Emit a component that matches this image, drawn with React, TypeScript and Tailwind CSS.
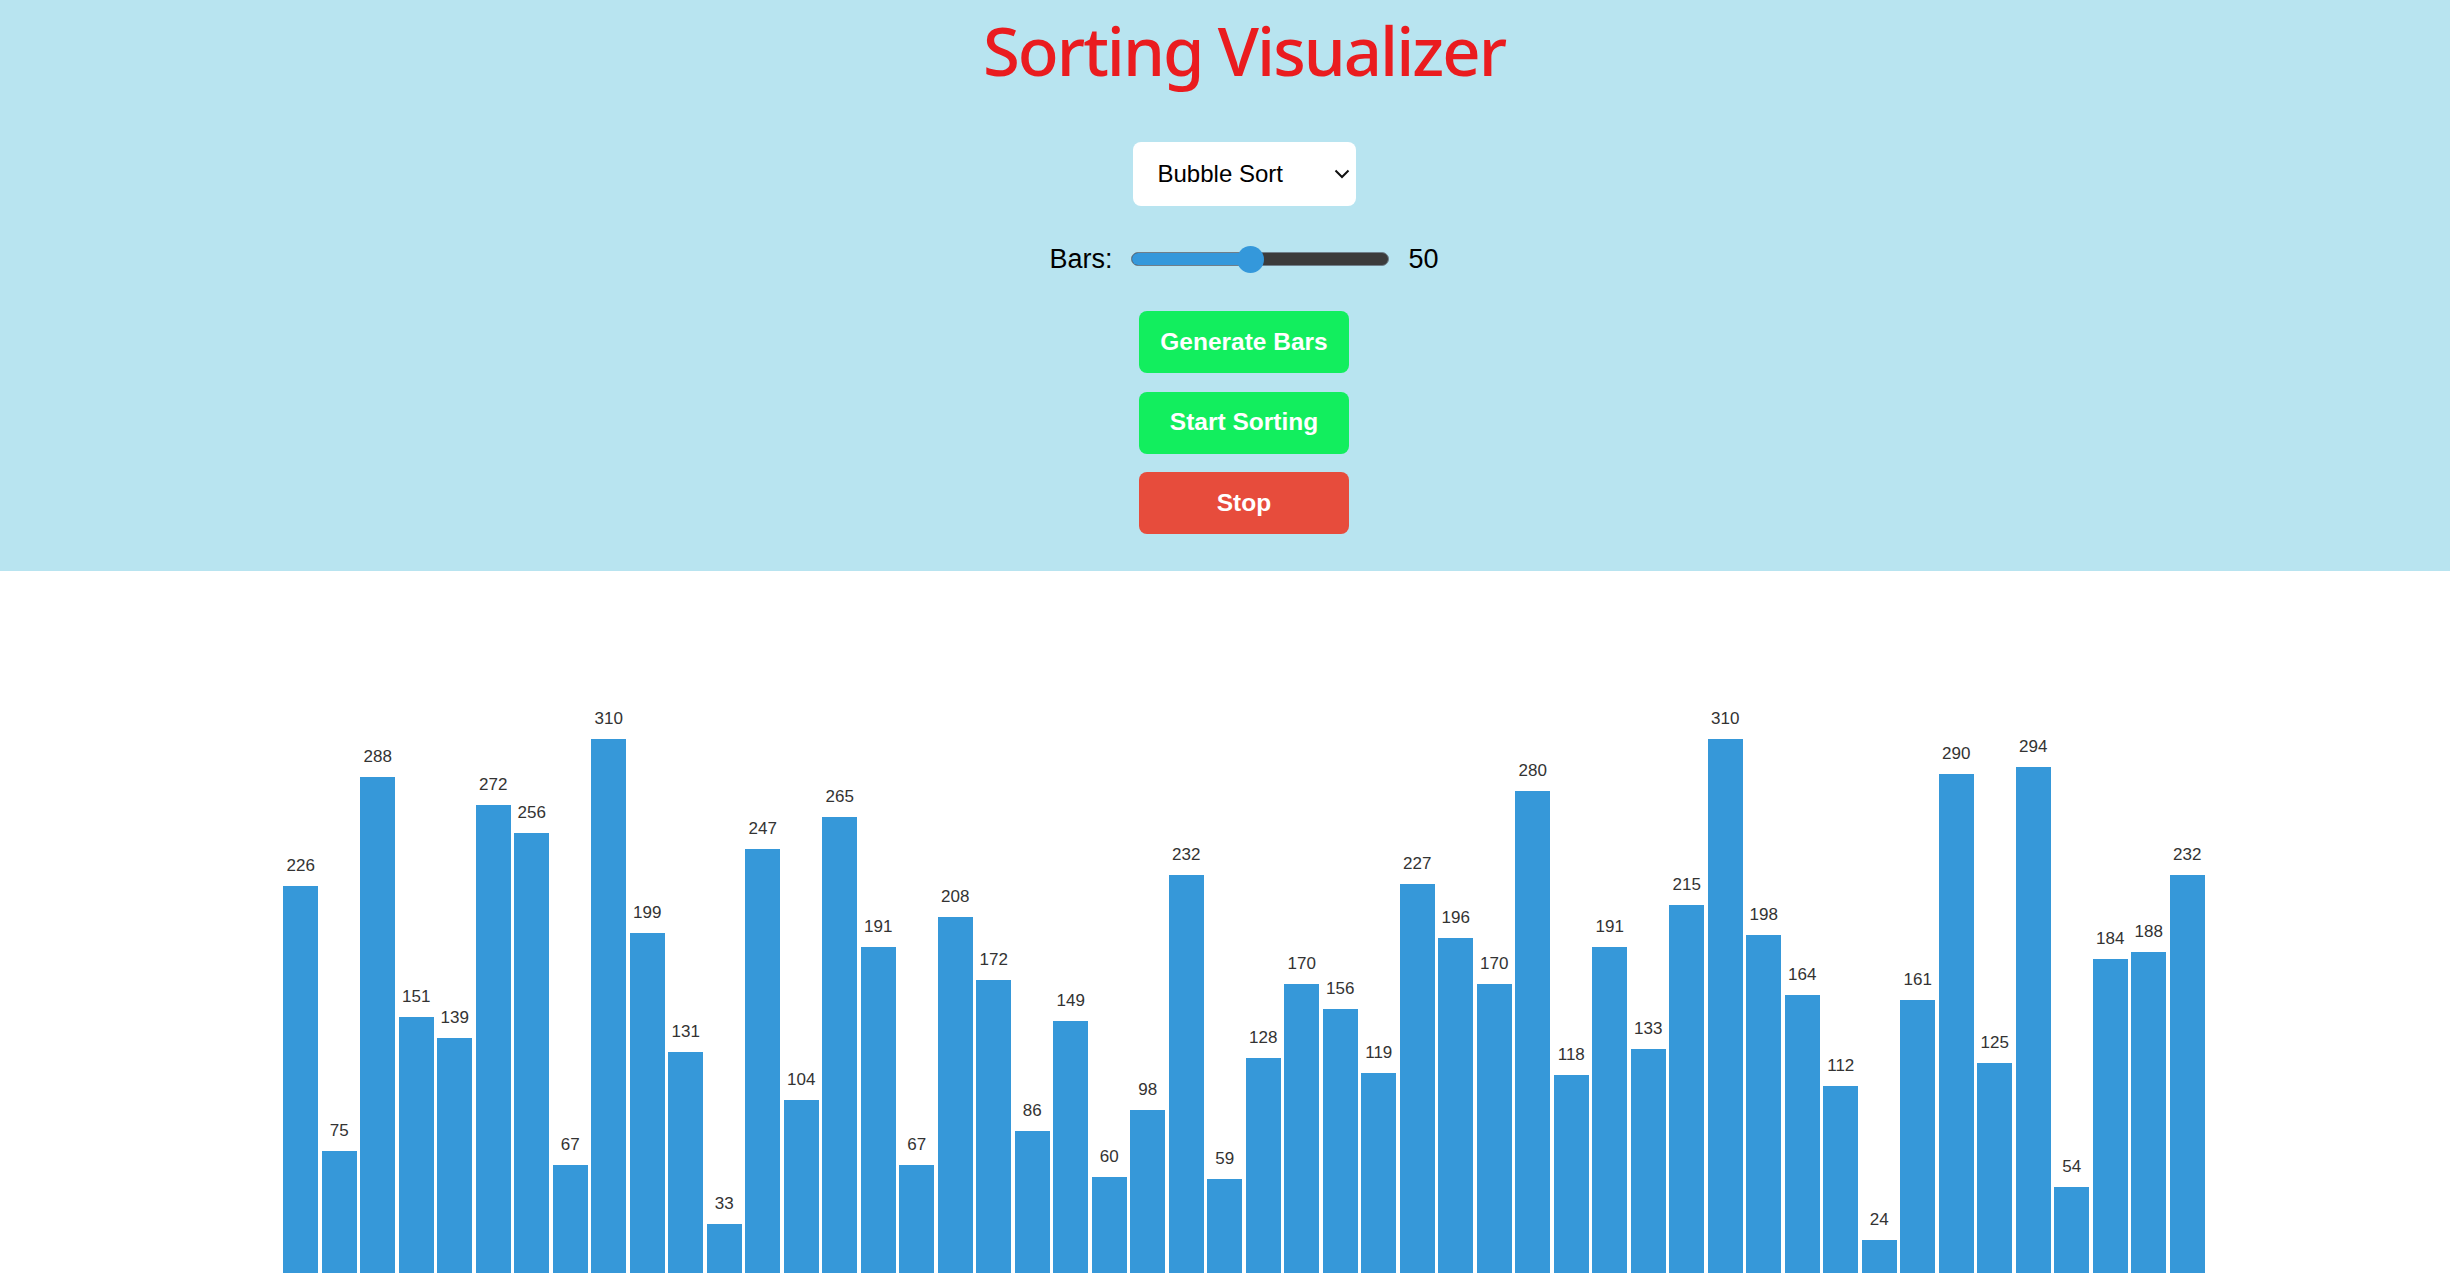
import React from "react";

const values = [
  226, 75, 288, 151, 139, 272, 256, 67, 310, 199,
  131, 33, 247, 104, 265, 191, 67, 208, 172, 86,
  149, 60, 98, 232, 59, 128, 170, 156, 119, 227,
  196, 170, 280, 118, 191, 133, 215, 310, 198, 164,
  112, 24, 161, 290, 125, 294, 54, 184, 188, 232,
];

function Slider() {
  const pct = 0.46;
  return (
    <div className="relative w-[258px] h-[28px] flex items-center">
      <div className="relative w-full h-[14px] rounded-full bg-[#3b3b3b] border-[1.5px] border-[#6f7f8a] overflow-hidden">
        <div className="h-full bg-[#3498db]" style={{ width: `${pct * 100}%` }} />
      </div>
      <div
        className="absolute top-[0.5px] w-[27px] h-[27px] rounded-full bg-[#3498db]"
        style={{ left: `calc(${pct * 100}% - 13.5px)` }}
      />
    </div>
  );
}

export default function App() {
  return (
    <div className="h-[1273px] overflow-hidden bg-white" style={{ fontFamily: '"Liberation Sans", Arial, sans-serif' }}>
      <header className="bg-[#b8e4f0] pt-[17px] pb-[37px]">
        <div className="pl-[38px] flex flex-col items-center">
          <h1
            className="text-[67px] leading-none text-[#ea1c1f] tracking-[-2px]"
            style={{ fontFamily: '"Noto Sans", "Open Sans", sans-serif', fontWeight: 500 }}
          >
            Sorting Visualizer
          </h1>
          <div className="relative mt-[58px]">
            <select
              className="appearance-none w-[223px] h-[64px] rounded-[8px] bg-white pl-[25px] pr-[40px] text-[24px] text-black outline-none border-0"
              style={{ fontFamily: '"Liberation Sans", Arial, sans-serif' }}
              defaultValue="bubble"
            >
              <option value="bubble">Bubble Sort</option>
              <option value="selection">Selection Sort</option>
              <option value="insertion">Insertion Sort</option>
              <option value="merge">Merge Sort</option>
              <option value="quick">Quick Sort</option>
            </select>
            <svg
              className="absolute right-[6px] top-[27px] pointer-events-none"
              width="16"
              height="10"
              viewBox="0 0 16 10"
              fill="none"
            >
              <path d="M1.5 1.5 L8 8 L14.5 1.5" stroke="#111" strokeWidth="2" />
            </svg>
          </div>
          <div className="mt-[37px] h-[32px] flex items-center gap-[19px] text-[27px] leading-[32px] text-black">
            <span>Bars:</span>
            <Slider />
            <span>50</span>
          </div>
          <div className="mt-[36px] flex flex-col gap-[18.5px]">
            <button className="w-[210px] h-[62px] rounded-[8px] bg-[#12ee5e] text-white text-[24.5px] font-bold">
              Generate Bars
            </button>
            <button className="w-[210px] h-[62px] rounded-[8px] bg-[#12ee5e] text-white text-[24.5px] font-bold">
              Start Sorting
            </button>
            <button className="w-[210px] h-[62px] rounded-[8px] bg-[#e74c3c] text-white text-[24.5px] font-bold">
              Stop
            </button>
          </div>
        </div>
      </header>
      <section className="pl-[38px] h-[711px] flex items-end justify-center gap-[3.5px]">
        {values.map((v, i) => (
          <div key={i} className="flex flex-col items-center w-[35px]">
            <span className="text-[17px] leading-none text-[#333] mb-[12px]">{v}</span>
            <div className="w-[35px] bg-[#3698d9]" style={{ height: `${v * 1.753}px` }} />
          </div>
        ))}
      </section>
    </div>
  );
}
